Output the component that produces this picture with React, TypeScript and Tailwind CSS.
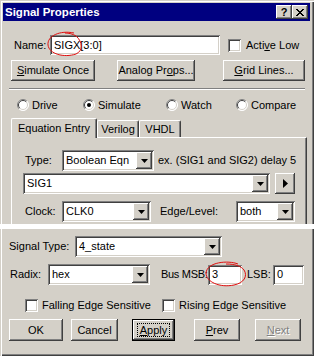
import React from 'react';

const raised =
  'shadow-[inset_-1px_-1px_0_#404040,inset_1px_1px_0_#ffffff,inset_-2px_-2px_0_#808080,inset_2px_2px_0_#d4d0c8]';
const sunken =
  'shadow-[inset_1px_1px_0_#808080,inset_-1px_-1px_0_#ffffff,inset_2px_2px_0_#404040,inset_-2px_-2px_0_#d4d0c8]';

type Kids = { children?: React.ReactNode; className?: string };

function U({ children }: Kids) {
  return <span className="underline underline-offset-[1px]">{children}</span>;
}

function Btn({ children, className = '' }: Kids) {
  return (
    <div className={`flex items-center justify-center bg-[#d4d0c8] ${raised} ${className}`}>
      {children}
    </div>
  );
}

function DropBtn() {
  return (
    <div className={`flex h-full w-[16px] items-center justify-center bg-[#d4d0c8] ${raised}`}>
      <svg width="7" height="4" viewBox="0 0 7 4">
        <path d="M0 0h7L3.5 4z" fill="#000" />
      </svg>
    </div>
  );
}

function Combo({ value, className = '' }: { value: string; className?: string }) {
  return (
    <div className={`flex h-[21px] items-stretch bg-white p-[2px] ${sunken} ${className}`}>
      <div className="flex flex-1 items-center pl-[2px]">{value}</div>
      <DropBtn />
    </div>
  );
}

function Edit({ value, className = '' }: { value: string; className?: string }) {
  return (
    <div className={`flex h-[20px] items-center bg-white pl-[4px] ${sunken} ${className}`}>{value}</div>
  );
}

function Check() {
  return <div className={`h-[13px] w-[13px] shrink-0 bg-white ${sunken}`} />;
}

function Radio({ on = false }: { on?: boolean }) {
  return (
    <svg width="12" height="12" viewBox="0 0 12 12" className="shrink-0">
      <circle cx="6" cy="6" r="5.5" fill="#fff" />
      <path d="M2.1 9.9A5.5 5.5 0 0 1 9.9 2.1" stroke="#808080" fill="none" />
      <path d="M9.9 2.1A5.5 5.5 0 0 1 2.1 9.9" stroke="#fff" fill="none" />
      <path d="M2.8 9.2A4.5 4.5 0 0 1 9.2 2.8" stroke="#404040" fill="none" />
      <path d="M9.2 2.8A4.5 4.5 0 0 1 2.8 9.2" stroke="#d4d0c8" fill="none" />
      {on && <circle cx="6" cy="6" r="2" fill="#000" />}
    </svg>
  );
}

function CloseGlyph() {
  return (
    <svg width="8" height="7" viewBox="0 0 8 7" shapeRendering="crispEdges">
      <path
        d="M0 0h2v1H0zM6 0h2v1H6zM1 1h2v1H1zM5 1h2v1H5zM2 2h4v1H2zM3 3h2v1H3zM2 4h4v1H2zM1 5h2v1H1zM5 5h2v1H5zM0 6h2v1H0zM6 6h2v1H6z"
        fill="#000"
      />
    </svg>
  );
}

export default function App() {
  return (
    <div className="relative h-[356px] w-[315px] overflow-hidden bg-white font-['Liberation_Sans',Arial,sans-serif] text-[11px] leading-[13px] text-black">
      <div className="flex w-[314px] flex-col">
        {/* upper part of the dialog */}
        <div className="flex h-[224px] flex-col bg-[#d4d0c8] pl-[3px] pr-[4px] pt-[3px] shadow-[inset_1px_1px_0_#d4d0c8,inset_2px_2px_0_#ffffff,inset_-1px_0_0_#404040,inset_-2px_0_0_#808080]">
          <div className="flex h-[18px] items-center bg-[#000080] pl-[2px] pr-[2px]">
            <span className="flex-1 text-[11.5px] font-bold text-white">Signal Properties</span>
            <Btn className="h-[14px] w-[16px] text-[11px] font-bold leading-none">?</Btn>
            <Btn className="h-[14px] w-[16px]">
              <CloseGlyph />
            </Btn>
          </div>

          <div className="ml-[11px] mt-[14px] flex h-[20px] items-center">
            <span className="w-[36px]">Name:</span>
            <Edit value="SIGX[3:0]" className="w-[170px]" />
            <div className="ml-[8px]">
              <Check />
            </div>
            <span className="ml-[5px]">
              Acti<U>v</U>e Low
            </span>
          </div>

          <div className="ml-[8px] mt-[5px] flex h-[21px]">
            <Btn className="w-[84px]">
              <U>S</U>imulate Once
            </Btn>
            <Btn className="ml-[22px] w-[78px]">
              Analog Pr<U>o</U>ps...
            </Btn>
            <Btn className="ml-[28px] w-[82px]">
              <U>G</U>rid Lines...
            </Btn>
          </div>

          <div className="ml-[6px] mt-[7px] h-[2px] w-[296px] border-b border-t border-b-white border-t-[#808080]" />

          <div className="ml-[14px] mt-[9px] flex h-[12px] items-center">
            <div className="flex w-[66px] items-center gap-[3px]">
              <Radio />
              <span>Drive</span>
            </div>
            <div className="flex w-[83px] items-center gap-[3px]">
              <Radio on />
              <span>Simulate</span>
            </div>
            <div className="flex w-[70px] items-center gap-[3px]">
              <Radio />
              <span>Watch</span>
            </div>
            <div className="flex items-center gap-[3px]">
              <Radio />
              <span>Compare</span>
            </div>
          </div>

          <div className="ml-[8px] mt-[7px] flex h-[19px] items-end">
            <div className="relative z-10 -mb-px flex h-[20px] w-[86px] items-center justify-center rounded-t-[2px] border-l border-r border-t border-l-white border-r-[#404040] border-t-white bg-[#d4d0c8] shadow-[inset_-1px_0_0_#808080]">
              Equation Entry
            </div>
            <div className="flex h-[17px] w-[42px] items-center justify-center rounded-t-[2px] border-l border-r border-t border-l-white border-r-[#404040] border-t-white shadow-[inset_-1px_0_0_#808080]">
              Verilog
            </div>
            <div className="flex h-[17px] w-[42px] items-center justify-center rounded-t-[2px] border-l border-r border-t border-l-white border-r-[#404040] border-t-white shadow-[inset_-1px_0_0_#808080]">
              VHDL
            </div>
          </div>

          <div className="ml-[8px] flex w-[296px] flex-1 flex-col border-l border-r border-t border-l-white border-r-[#404040] border-t-white shadow-[inset_-1px_0_0_#808080]">
            <div className="ml-[13px] mt-[12px] flex h-[21px] items-center">
              <span className="w-[37px]">Type:</span>
              <Combo value="Boolean Eqn" className="w-[92px]" />
              <span className="ml-[4px] whitespace-nowrap">ex. (SIG1 and SIG2) delay 5</span>
            </div>
            <div className="ml-[11px] mt-[2px] flex h-[21px]">
              <Combo value="SIG1" className="w-[247px]" />
              <Btn className="ml-[5px] w-[20px]">
                <svg width="5" height="9" viewBox="0 0 5 9">
                  <path d="M0 0l5 4.5L0 9z" fill="#000" />
                </svg>
              </Btn>
            </div>
            <div className="ml-[13px] mt-[7px] flex h-[21px] items-center">
              <span className="w-[37px]">Clock:</span>
              <Combo value="CLK0" className="w-[89px]" />
              <span className="ml-[9px] w-[76px] whitespace-nowrap">Edge/Level:</span>
              <Combo value="both" className="w-[59px]" />
            </div>
          </div>
        </div>

        <div className="h-[5px] bg-white" />

        {/* lower part of the dialog */}
        <div className="flex h-[127px] flex-col bg-[#d4d0c8] pl-[3px] pr-[4px] shadow-[inset_1px_0_0_#d4d0c8,inset_2px_0_0_#ffffff,inset_-1px_-1px_0_#404040,inset_-2px_-2px_0_#808080]">
          <div className="ml-[6px] mt-[7px] flex h-[21px] items-center">
            <span className="w-[66px]">Signal Type:</span>
            <Combo value="4_state" className="w-[147px]" />
          </div>
          <div className="ml-[7px] mt-[7px] flex h-[21px] items-center">
            <span className="w-[38px]">Radix:</span>
            <Combo value="hex" className="w-[102px]" />
            <span className="ml-[11px] w-[47px] whitespace-nowrap tracking-[-0.3px]">Bus MSB:</span>
            <Edit value="3" className="w-[34px]" />
            <span className="ml-[5px] w-[26px]">LSB:</span>
            <Edit value="0" className="w-[31px]" />
          </div>
          <div className="ml-[22px] mt-[14px] flex h-[13px] items-center">
            <div className="flex w-[137px] items-center gap-[4px]">
              <Check />
              <span className="whitespace-nowrap">Falling Edge Sensitive</span>
            </div>
            <div className="flex items-center gap-[4px]">
              <Check />
              <span className="whitespace-nowrap">Rising Edge Sensitive</span>
            </div>
          </div>
          <div className="ml-[6px] mt-[7px] flex h-[22px]">
            <Btn className="w-[54px]">OK</Btn>
            <Btn className="ml-[8px] w-[47px]">Cancel</Btn>
            <div className="ml-[14px] flex w-[43px] items-center justify-center bg-[#d4d0c8] shadow-[inset_0_0_0_1px_#000000,inset_-2px_-2px_0_#404040,inset_2px_2px_0_#ffffff,inset_-3px_-3px_0_#808080]">
              <span className="border border-dotted border-black px-[2px] leading-[12px]">
                <U>A</U>pply
              </span>
            </div>
            <Btn className="ml-[19px] w-[46px]">
              <U>P</U>rev
            </Btn>
            <Btn className="ml-[15px] w-[46px] text-[#808080] [text-shadow:1px_1px_0_#ffffff]">
              <U>N</U>ext
            </Btn>
          </div>
        </div>
      </div>

      {/* red hand-drawn annotations */}
      <svg className="pointer-events-none absolute left-0 top-0" width="315" height="356">
        <path d="M74 33C60 30 47 36 48 45c1 9 16 13 28 9 7-3 7-12 0-18-3-2-7-3-11-3" stroke="#e01010" strokeWidth="1" fill="none" />
        <path d="M238 264c-10-4-31-2-32 9 0 9 14 15 28 12 10-2 14-9 10-15-3-4-9-6-18-6" stroke="#e01010" strokeWidth="1" fill="none" />
      </svg>
    </div>
  );
}
